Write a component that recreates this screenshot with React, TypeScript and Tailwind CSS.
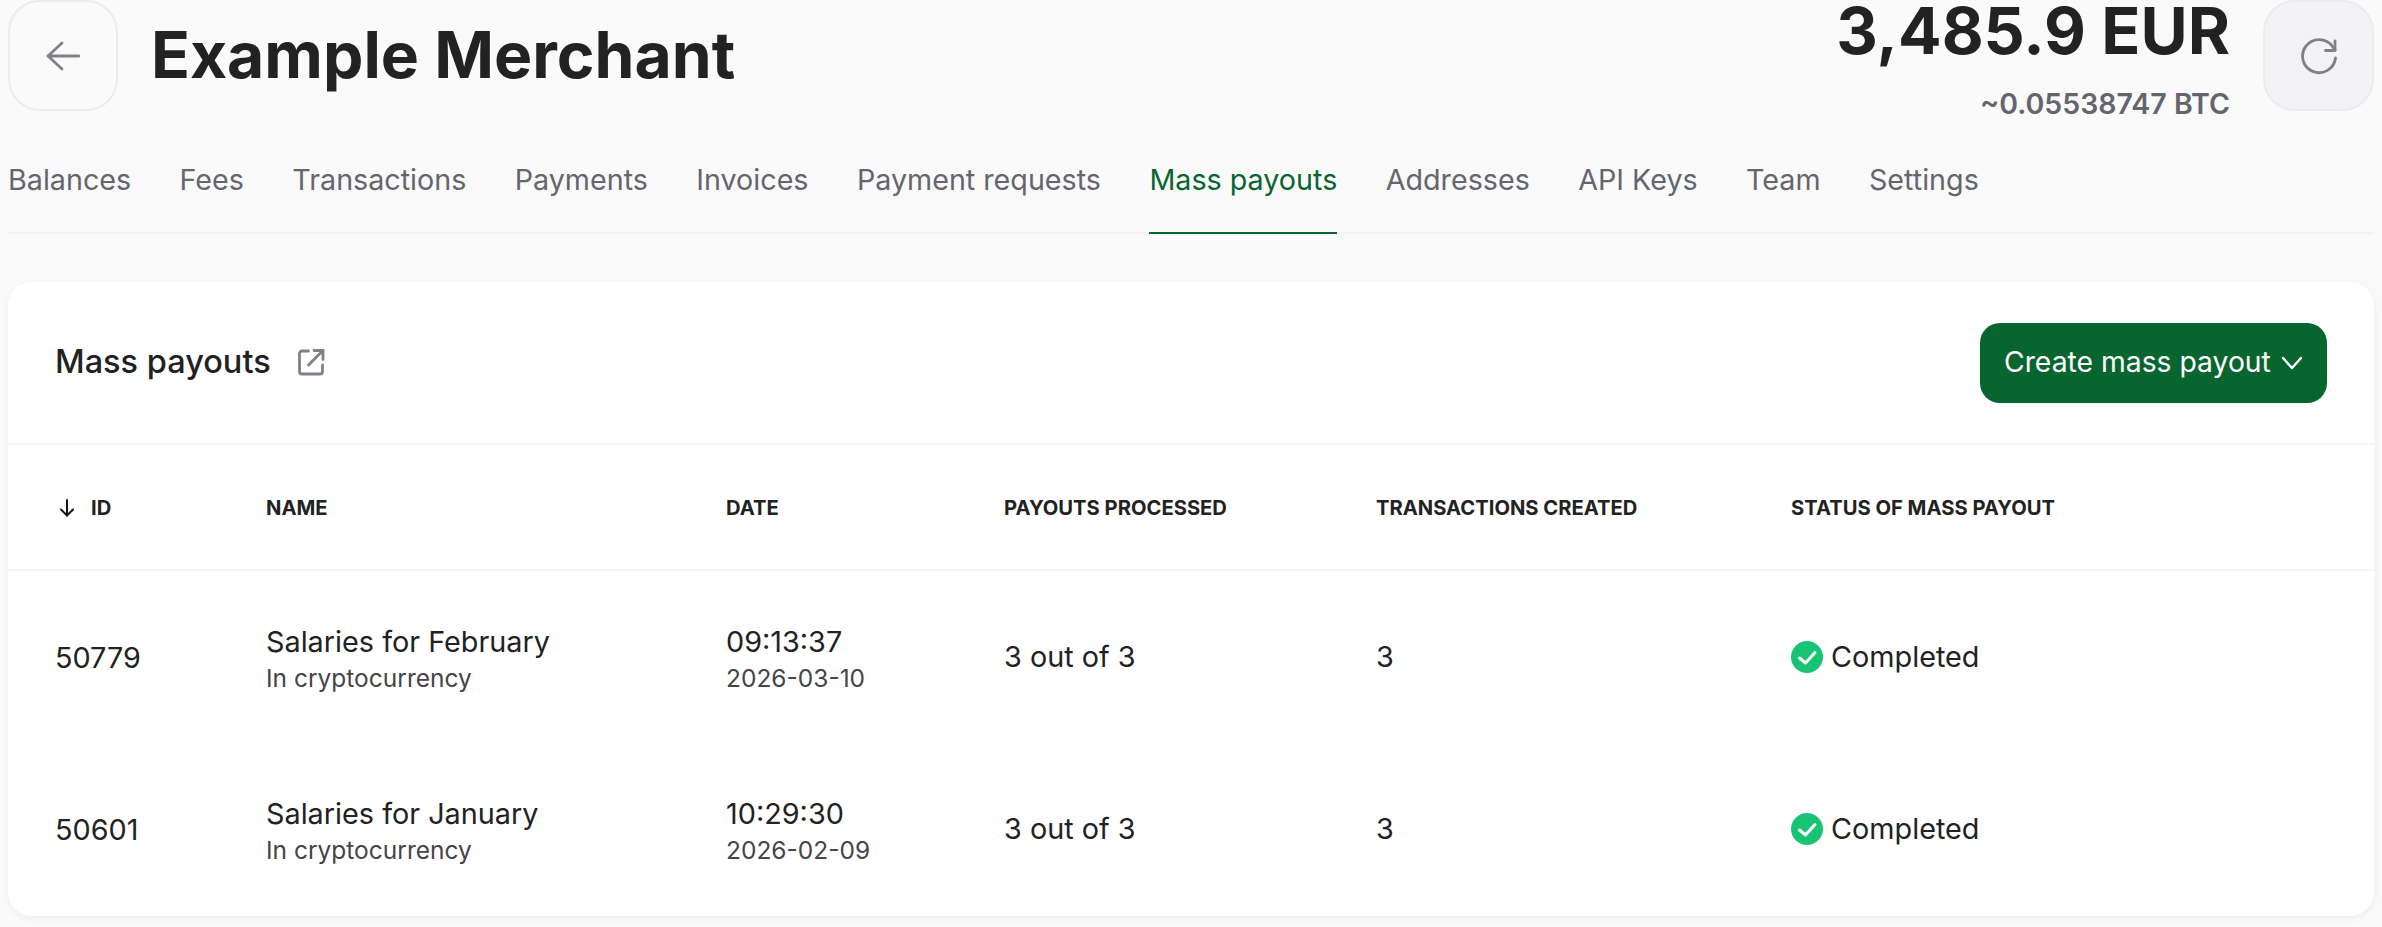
const tabs = ["Balances", "Fees", "Transactions", "Payments", "Invoices", "Payment requests", "Mass payouts", "Addresses", "API Keys", "Team", "Settings"];

const rows = [
  { id: "50779", name: "Salaries for February", time: "09:13:37", date: "2026-03-10" },
  { id: "50601", name: "Salaries for January", time: "10:29:30", date: "2026-02-09" },
];

const grid = "grid grid-cols-[211px_460px_278px_372px_415px_1fr] items-center pl-[47px]";

function BackIcon() {
  return (
    <svg width="34" height="30" viewBox="0 0 34 30" fill="none" stroke="#808087" strokeWidth="2.8" strokeLinecap="round" strokeLinejoin="round">
      <path d="M33 15H2" />
      <path d="M16 2 2 15l14 13" />
    </svg>
  );
}

function RefreshIcon() {
  return (
    <svg width="38" height="38" viewBox="0 0 38 38" fill="none" stroke="#808087" strokeWidth="2.8" strokeLinecap="round" strokeLinejoin="round">
      <path d="M35.500 21a16.500 16.500 0 1 1-3-11.500L35 13" />
      <path d="M35 4v9.500h-9.500" />
    </svg>
  );
}

function ExternalIcon() {
  return (
    <svg width="27" height="27" viewBox="0 0 27 27" fill="none" stroke="#808087" strokeWidth="2.8" strokeLinecap="round" strokeLinejoin="round">
      <path d="M10.500 2H4A2.500 2.500 0 0 0 1.500 4.500v18A2.500 2.500 0 0 0 4 25h18a2.500 2.500 0 0 0 2.500-2.500V16" />
      <path d="M16 1.500h9v9" />
      <path d="M25 1.500 10.500 16" />
    </svg>
  );
}

function SortIcon() {
  return (
    <svg width="18" height="18" viewBox="0 0 18 18" fill="none" stroke="#15151c" strokeWidth="2" strokeLinecap="round" strokeLinejoin="round">
      <path d="M9 1v15.500" />
      <path d="M3 10.500 9 16.500l6-6" />
    </svg>
  );
}

function ChevronIcon() {
  return (
    <svg width="22" height="14" viewBox="0 0 22 14" fill="none" stroke="#ffffff" strokeWidth="2.400" strokeLinecap="round" strokeLinejoin="round">
      <path d="M2 2 11 12l9-10" />
    </svg>
  );
}

function CheckIcon() {
  return (
    <svg width="32" height="32" viewBox="0 0 32 32" className="shrink-0">
      <circle cx="16" cy="16" r="16" fill="#18c473" />
      <path d="M8.500 17 14.500 22 24 11.500" fill="none" stroke="#fff" strokeWidth="3" strokeLinecap="round" strokeLinejoin="round" />
    </svg>
  );
}

export default function App() {
  return (
    <div className="min-h-[927px] overflow-hidden bg-[#fafafb] px-2 font-['Inter',sans-serif] text-[#222222]">
      <header className="flex h-[111px] items-start justify-between">
        <div className="flex items-center">
          <button className="grid h-[111px] w-[110px] place-items-center rounded-[32px] border-2 border-[#ececee]">
            <BackIcon />
          </button>
          <h1 className="ml-[33px] text-[64.200px] leading-none font-bold">Example Merchant</h1>
        </div>
        <div className="flex items-start">
          <div className="flex flex-col items-end">
            <div className="text-[64.500px] leading-[62px] font-bold">3,485.9 EUR</div>
            <div className="mt-[26px] text-[28.500px] leading-[32px] font-semibold text-[#65656d]">~0.05538747 BTC</div>
          </div>
          <button className="ml-[33px] grid h-[111px] w-[111px] place-items-center rounded-[32px] border-2 border-[#ececee] bg-[#f3f3f5]">
            <RefreshIcon />
          </button>
        </div>
      </header>

      <nav className="flex h-[123px] gap-[48.400px] border-b-2 border-[#f3f3f5]">
        {tabs.map((tab) => (
          <a
            key={tab}
            className={
              tab === "Mass payouts"
                ? "-mb-[2px] flex items-center border-b-2 border-[#07652f] pt-[17px] text-[28.700px] font-normal text-[#07652f]"
                : "-mb-[2px] flex items-center border-b-2 border-transparent pt-[17px] text-[28.700px] font-normal text-[#65656d]"
            }
          >
            {tab}
          </a>
        ))}
      </nav>

      <section className="mt-[48px] h-[634px] overflow-hidden rounded-[24px] bg-white shadow-[0_2px_8px_rgba(0,0,0,0.06)]">
        <div className="flex h-[163px] items-center justify-between border-b-2 border-[#f5f5f6] pr-[47px] pl-[47px]">
          <div className="flex items-center gap-[27px]">
            <h2 className="text-[32.500px] font-medium">Mass payouts</h2>
            <ExternalIcon />
          </div>
          <button className="flex h-[80px] w-[347px] items-center gap-[10px] rounded-[20px] bg-[#07652f] pl-[24px] text-[28.300px] font-normal text-white">
            Create mass payout
            <ChevronIcon />
          </button>
        </div>

        <div className={`${grid} h-[126px] border-b-2 border-[#f5f5f6] pt-[2px] text-[20.200px] font-bold uppercase`}>
          <div className="flex items-center gap-[15px] pl-[3px]">
            <SortIcon />
            ID
          </div>
          <div>Name</div>
          <div>Date</div>
          <div>Payouts processed</div>
          <div>Transactions created</div>
          <div>Status of mass payout</div>
        </div>

        {rows.map((row) => (
          <div key={row.id} className={`${grid} h-[172px] text-[28.800px]`}>
            <div className="pt-[2px]">{row.id}</div>
            <div className="pt-[4px]">
              <div className="leading-[34px]">{row.name}</div>
              <div className="mt-[3px] text-[24.500px] leading-[32px] text-[#444449]">In cryptocurrency</div>
            </div>
            <div className="pt-[4px]">
              <div className="leading-[34px]">{row.time}</div>
              <div className="mt-[3px] text-[24.500px] leading-[32px] text-[#444449]">{row.date}</div>
            </div>
            <div>3 out of 3</div>
            <div>3</div>
            <div className="flex items-center gap-[8px]">
              <CheckIcon />
              Completed
            </div>
          </div>
        ))}
      </section>
    </div>
  );
}
